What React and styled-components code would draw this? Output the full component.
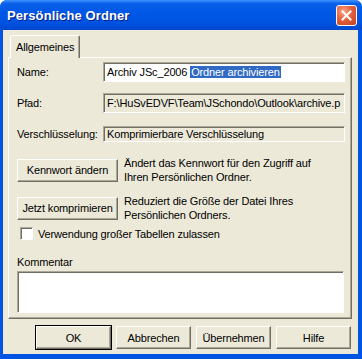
import React from "react";
import styled, { createGlobalStyle } from "styled-components";

const Global = createGlobalStyle`
  html, body { margin: 0; padding: 0; background: #fff; }
  body { font-family: "Liberation Sans", Arial, sans-serif; font-size: 11px; letter-spacing: -0.15px; color: #000; }
  * { box-sizing: border-box; }
`;

const Window = styled.div`
  width: 362px;
  height: 359px;
  display: flex;
  flex-direction: column;
  background: #0054e3;
  border-radius: 7px 7px 0 0;
  overflow: hidden;
`;

const TitleBar = styled.div`
  height: 30px;
  flex: none;
  display: flex;
  align-items: center;
  justify-content: space-between;
  padding: 0 5px 0 7px;
  background: linear-gradient(180deg, #3d95ff 0%, #0a5fe8 12%, #0058e6 40%, #0054e3 70%, #0048d0 100%);
`;

const Title = styled.span`
  color: #fff;
  font-weight: bold;
  font-size: 13px;
  letter-spacing: 0.1px;
  text-shadow: 1px 1px 0 #0a1f80;
`;

const CloseBtn = styled.div`
  width: 21px;
  height: 21px;
  border: 1px solid #fff;
  border-radius: 3px;
  background: radial-gradient(circle at 35% 30%, #f5a88a 0%, #e5603c 45%, #c4401b 100%);
  display: flex;
  align-items: center;
  justify-content: center;
`;

const Frame = styled.div`
  flex: 1;
  min-height: 0;
  margin: 0 4px 5px 3px;
  background: #ece9d8;
  display: flex;
  flex-direction: column;
  padding: 5px 6px 5px 5px;
`;

const TabStrip = styled.div`
  display: flex;
  padding-left: 2px;
  height: 22px;
  flex: none;
  position: relative;
  z-index: 1;
`;

const Tab = styled.div`
  height: 23px;
  padding: 0 5px;
  display: flex;
  align-items: center;
  background: #ece9d8;
  border-top: 1px solid #fff;
  border-left: 1px solid #fff;
  border-right: 1px solid #716f64;
  box-shadow: inset -1px 0 0 #aca899;
  border-radius: 2px 2px 0 0;
`;

const Panel = styled.div`
  flex: 1;
  min-height: 0;
  display: flex;
  flex-direction: column;
  padding: 4px 6px 5px 8px;
  border-top: 1px solid #fff;
  border-left: 1px solid #fff;
  border-right: 1px solid #716f64;
  border-bottom: 1px solid #716f64;
  box-shadow: inset -1px -1px 0 #aca899;
`;

const Row = styled.div`
  display: flex;
  align-items: center;
  margin-top: ${p => p.gap || 0}px;
`;

const Label = styled.span`
  width: 86px;
  flex: none;
  white-space: nowrap;
`;

const Field = styled.div`
  flex: 1;
  min-width: 0;
  height: ${p => p.h || 20}px;
  display: flex;
  align-items: center;
  padding: 0 3px;
  white-space: nowrap;
  overflow: hidden;
  background: ${p => (p.readOnly ? "#ece9d8" : "#fff")};
  border-top: 1px solid #aca899;
  border-left: 1px solid #aca899;
  border-right: 1px solid #fff;
  border-bottom: 1px solid #fff;
  box-shadow: inset 1px 1px 0 #716f64;
`;

const Selected = styled.span`
  background: #316ac5;
  color: #fff;
  padding: 0 1px;
`;

const Btn = styled.div`
  width: ${p => p.w || 75}px;
  height: 23px;
  flex: none;
  display: flex;
  align-items: center;
  justify-content: center;
  background: #ece9d8;
  border-top: 1px solid #fff;
  border-left: 1px solid #fff;
  border-right: 1px solid #716f64;
  border-bottom: 1px solid #716f64;
  box-shadow: inset -1px -1px 0 #aca899;
  outline: ${p => (p.def ? "1px solid #000" : "none")};
  white-space: nowrap;
`;

const Desc = styled.div`
  margin-left: 6px;
  line-height: 14px;
`;

const CheckRow = styled.label`
  display: flex;
  align-items: center;
  gap: 5px;
  margin: 5px 0 0 3px;
`;

const Box = styled.span`
  width: 13px;
  height: 13px;
  background: #fff;
  border-top: 1px solid #aca899;
  border-left: 1px solid #aca899;
  border-right: 1px solid #fff;
  border-bottom: 1px solid #fff;
  box-shadow: inset 1px 1px 0 #716f64;
`;

const Caption = styled.div`
  margin-top: 16px;
`;

const Comment = styled.div`
  margin-top: 3px;
  flex: 1;
  margin-right: 1px;
  background: #fff;
  border-top: 1px solid #aca899;
  border-left: 1px solid #aca899;
  border-right: 1px solid #fff;
  border-bottom: 1px solid #fff;
  box-shadow: inset 1px 1px 0 #716f64;
`;

const Footer = styled.div`
  display: flex;
  justify-content: flex-end;
  gap: 5px;
  margin-top: 7px;
  padding-right: 1px;
  flex: none;
`;

export default function App() {
  return (
    <>
      <Global />
      <Window>
        <TitleBar>
          <Title>Persönliche Ordner</Title>
          <CloseBtn>
            <svg width="11" height="11" viewBox="0 0 11 11">
              <path d="M1.5 1.5 L9.5 9.5 M9.5 1.5 L1.5 9.5" stroke="#fff" strokeWidth="2" strokeLinecap="square" />
            </svg>
          </CloseBtn>
        </TitleBar>
        <Frame>
          <TabStrip>
            <Tab>Allgemeines</Tab>
          </TabStrip>
          <Panel>
            <Row>
              <Label>Name:</Label>
              <Field>
                Archiv JSc_2006&nbsp;<Selected>Ordner archivieren</Selected>
              </Field>
            </Row>
            <Row gap={11}>
              <Label>Pfad:</Label>
              <Field readOnly>F:\HuSvEDVF\Team\JSchondo\Outlook\archive.p</Field>
            </Row>
            <Row gap={13}>
              <Label>Verschlüsselung:</Label>
              <Field readOnly h={16}>Komprimierbare Verschlüsselung</Field>
            </Row>
            <Row gap={14}>
              <Btn w={101}>Kennwort ändern</Btn>
              <Desc>
                Ändert das Kennwort für den Zugriff auf
                <br />
                Ihren Persönlichen Ordner.
              </Desc>
            </Row>
            <Row gap={10}>
              <Btn w={101}>Jetzt komprimieren</Btn>
              <Desc>
                Reduziert die Größe der Datei Ihres
                <br />
                Persönlichen Ordners.
              </Desc>
            </Row>
            <CheckRow>
              <Box />
              Verwendung großer Tabellen zulassen
            </CheckRow>
            <Caption>Kommentar</Caption>
            <Comment />
          </Panel>
          <Footer>
            <Btn def>OK</Btn>
            <Btn>Abbrechen</Btn>
            <Btn>Übernehmen</Btn>
            <Btn>Hilfe</Btn>
          </Footer>
        </Frame>
      </Window>
    </>
  );
}
